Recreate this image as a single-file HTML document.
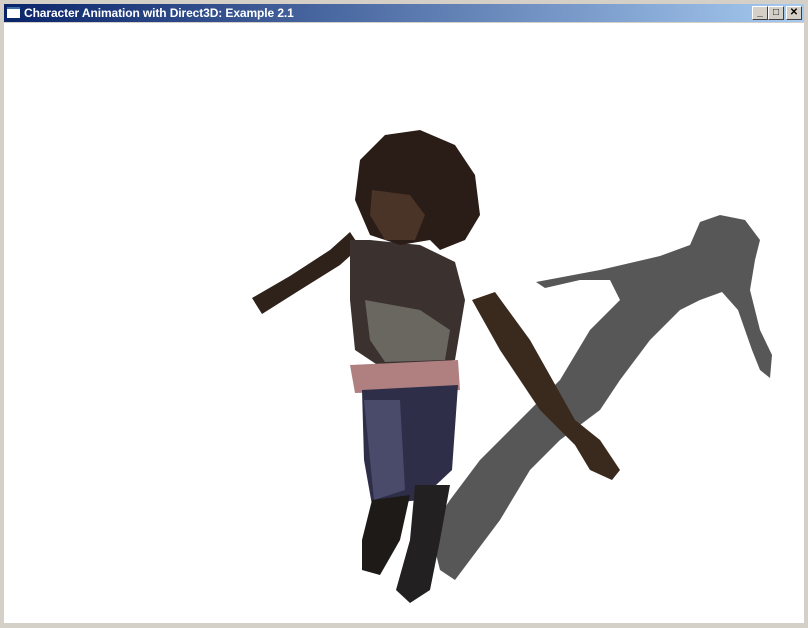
<!DOCTYPE html>
<html><head><style>
html,body{margin:0;padding:0;}
body{width:808px;height:627px;background:#d4d0c8;position:relative;overflow:hidden;font-family:Tahoma,"Liberation Sans",sans-serif;}
.tb{position:absolute;left:4px;top:4px;width:800px;height:18px;background:linear-gradient(to right,#0a246a,#a6caf0);}
.tt{position:absolute;left:20px;top:2px;color:#fff;font-weight:bold;font-size:12px;letter-spacing:-0.1px;}
.ic{position:absolute;left:3px;top:3px;width:13px;height:11px;background:#fff;border-top:2px solid #3a6ea5;box-sizing:border-box;}
.bt{position:absolute;top:2px;width:16px;height:14px;background:#d4d0c8;border:1px solid;border-color:#fff #404040 #404040 #fff;box-sizing:border-box;font-size:10px;line-height:12px;text-align:center;color:#000;font-weight:bold;}
.cl{position:absolute;left:4px;top:23px;width:800px;height:600px;background:#fff;}
</style></head><body>
<div class="tb"><div class="ic"></div><div class="tt">Character Animation with Direct3D: Example 2.1</div>
<div class="bt" style="left:748px">_</div><div class="bt" style="left:764px">□</div><div class="bt" style="left:782px">✕</div></div>
<div class="cl">
<svg width="800" height="600" viewBox="4 23 800 600">
<polygon fill="#575757" points="536,282 600,270 660,256 690,245 700,222 720,215 745,220 760,240 755,260 750,290 760,330 772,355 770,378 760,370 752,350 738,310 722,292 700,300 680,310 650,340 620,380 600,410 560,440 530,470 500,520 470,560 455,580 440,570 430,530 450,500 480,460 520,420 560,380 590,330 620,300 610,280 580,280 545,288"/>
<polygon fill="#2e221a" points="252,298 290,276 330,250 350,232 360,247 340,265 300,290 262,314"/>
<polygon fill="#3a2a1e" points="472,300 495,292 530,340 575,420 600,440 620,470 612,480 590,470 575,445 540,410 500,350"/>
<polygon fill="#3b3230" points="350,240 370,240 420,245 455,262 465,300 455,360 430,365 385,370 355,350 350,300"/>
<polygon fill="#6a6660" points="365,300 420,310 450,330 445,360 385,362 370,340"/>
<polygon fill="#b08080" points="350,365 458,360 460,390 355,393"/>
<polygon fill="#2e2e48" points="362,390 458,385 452,470 420,500 372,505 364,460"/>
<polygon fill="#4a4a6a" points="364,400 400,400 405,490 374,500"/>
<polygon fill="#1e1a18" points="372,500 410,495 400,540 380,575 362,570 362,540"/>
<polygon fill="#222020" points="415,485 450,485 440,540 430,590 410,603 396,590 410,540"/>
<polygon fill="#2a1c16" points="360,160 385,135 420,130 455,145 475,175 480,215 465,240 440,250 430,240 400,245 370,235 355,200"/>
<polygon fill="#4a3428" points="372,190 410,195 425,215 415,240 385,240 370,215"/>
</svg>
</div>
</body></html>
